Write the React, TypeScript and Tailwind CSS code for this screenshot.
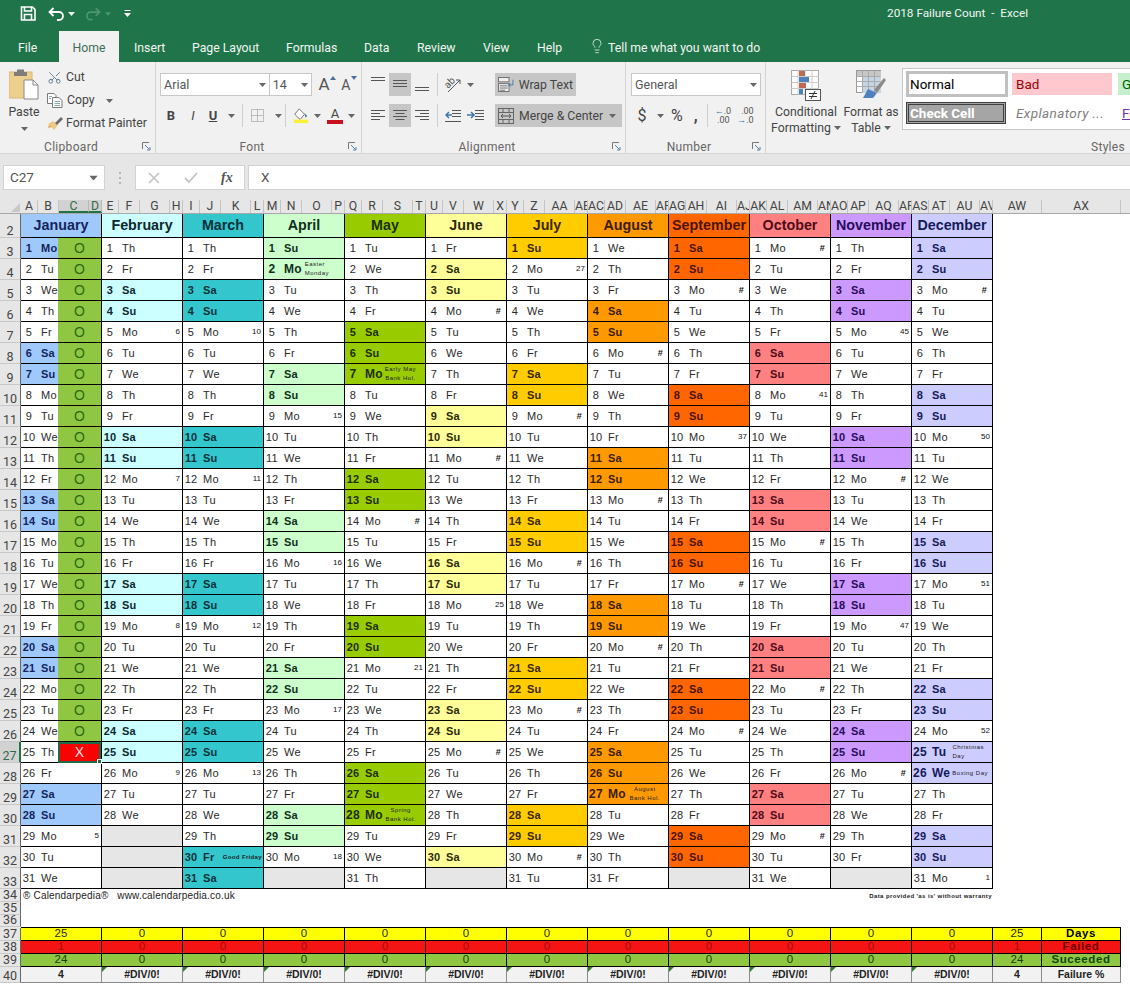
import React from 'react';
import { Lightbulb, Scissors } from 'lucide-react';

const MONTHS = [
  { name: 'January', days: 31, bg: 'bg-[#9fc9fb]', ink: 'text-[#14245c]' },
  { name: 'February', days: 28, bg: 'bg-[#ccffff]', ink: 'text-[#0c2830]' },
  { name: 'March', days: 31, bg: 'bg-[#33c6cc]', ink: 'text-[#083238]' },
  { name: 'April', days: 30, bg: 'bg-[#ccffcc]', ink: 'text-[#10301a]' },
  { name: 'May', days: 31, bg: 'bg-[#99cc00]', ink: 'text-[#1c3000]' },
  { name: 'June', days: 30, bg: 'bg-[#ffff99]', ink: 'text-[#2c2a08]' },
  { name: 'July', days: 31, bg: 'bg-[#ffcc00]', ink: 'text-[#3c2800]' },
  { name: 'August', days: 31, bg: 'bg-[#ff9900]', ink: 'text-[#3c1c00]' },
  { name: 'September', days: 30, bg: 'bg-[#ff6600]', ink: 'text-[#4c1400]' },
  { name: 'October', days: 31, bg: 'bg-[#ff8080]', ink: 'text-[#4c0c18]' },
  { name: 'November', days: 30, bg: 'bg-[#cc99ff]', ink: 'text-[#280c58]' },
  { name: 'December', days: 31, bg: 'bg-[#ccccff]', ink: 'text-[#141a58]' },
];

const WEEK: Record<string, string> = {
  '0-29': '5', '1-5': '6', '1-12': '7', '1-19': '8', '1-26': '9',
  '2-5': '10', '2-12': '11', '2-19': '12', '2-26': '13',
  '3-9': '15', '3-16': '16', '3-23': '17', '3-30': '18',
  '4-14': '#', '4-21': '21',
  '5-4': '#', '5-11': '#', '5-18': '25', '5-25': '#',
  '6-2': '27', '6-9': '#', '6-16': '#', '6-23': '#', '6-30': '#',
  '7-6': '#', '7-13': '#', '7-20': '#',
  '8-3': '#', '8-10': '37', '8-17': '#', '8-24': '#',
  '9-1': '#', '9-8': '41', '9-15': '#', '9-22': '#', '9-29': '#',
  '10-5': '45', '10-12': '#', '10-19': '47', '10-26': '#',
  '11-3': '#', '11-10': '50', '11-17': '51', '11-24': '52', '11-31': '1',
};

type Hol = { lines: string[]; cls: string };
const HOLIDAY: Record<string, Hol> = {
  '0-1': { lines: [], cls: '' },
  '2-30': { lines: ['Good Friday'], cls: 'pr-[1px] font-bold tracking-[0.35px]' },
  '3-2': { lines: ['Easter', 'Monday'], cls: 'pr-[15px] font-normal' },
  '4-7': { lines: ['Early May', 'Bank Hol.'], cls: 'pr-[9px] font-normal text-center' },
  '4-28': { lines: ['Spring', 'Bank Hol.'], cls: 'pr-[9px] font-normal text-center' },
  '7-27': { lines: ['August', 'Bank Hol.'], cls: 'pr-[8px] font-normal text-center' },
  '11-25': { lines: ['Christmas', 'Day'], cls: 'pr-[8px] font-normal' },
  '11-26': { lines: ['Boxing Day'], cls: 'pr-[4px] font-normal' },
};

const DOW = ['Su', 'Mo', 'Tu', 'We', 'Th', 'Fr', 'Sa'];
const LETTERS = 'ABCDEFGHIJKLMNOPQRSTUVWXYZ'.split('');
const SUBCOLS = [
  ...LETTERS,
  ...'ABCDEFGHIJKLMNOPQRSTUV'.split('').map((c) => 'A' + c),
];
const SUB_W = ['w-[17px]', 'w-[21px]', 'w-[30px]', 'w-[13px]'];

const Caret = ({ className = '' }: { className?: string }) => (
  <svg width="7" height="4" viewBox="0 0 7 4" className={className}>
    <path d="M0 0H7L3.5 4Z" fill="#666" />
  </svg>
);

const Launcher = () => (
  <svg width="9" height="9" viewBox="0 0 9 9" fill="none" stroke="#777" strokeWidth="1">
    <path d="M0.5 7V0.5H7" />
    <path d="M3 3L7.5 7.5M5 8H8V5" stroke="#5b7fa6" />
  </svg>
);

const Sep = () => <div className="w-px h-[23px] bg-[#d0d0d0]" />;

const Lines = ({ w, x = [], y, h = 23 }: { w: number[]; x?: number[]; y: number; h?: number }) => (
  <svg width="16" height={h} viewBox={`0 0 16 ${h}`} stroke="#555" strokeWidth="1">
    {w.map((len, i) => (
      <line key={i} x1={x[i] ?? 1} x2={(x[i] ?? 1) + len} y1={y + i * 3 + 0.5} y2={y + i * 3 + 0.5} />
    ))}
  </svg>
);

const Group = ({
  label,
  w,
  children,
}: {
  label: string;
  w: string;
  children: React.ReactNode;
}) => (
  <div className={`${w} h-[92px] flex flex-col border-r border-[#d4d4d4]`}>
    <div className="flex-1 min-h-0">{children}</div>
    <div className="h-[16px] pt-[1px] flex items-center text-[12px] leading-none text-[#666] tracking-[0.3px]">
      <span className="flex-1 text-center">{label}</span>
      <span className="pr-[4px] flex">
        <Launcher />
      </span>
    </div>
  </div>
);

const Dropdown = ({ w, label, className = '' }: { w: string; label: string; className?: string }) => (
  <div className={`${w} h-[23px] bg-white border border-[#c8c8c8] flex items-center justify-between px-[3px] text-[12.5px] text-[#555] ${className}`}>
    <span className="pt-[1px]">{label}</span>
    <Caret />
  </div>
);

const SaveIcon = () => (
  <svg width="16" height="15" viewBox="0 0 16 15" fill="none" stroke="#fff" strokeWidth="1.6">
    <path d="M1.5 1H12.5L15 3.5V14H1.5Z" />
    <path d="M4.5 1V5H11.5V1" />
    <path d="M4.5 14V8.5H11.5V14" />
  </svg>
);

const PasteIcon = () => (
  <svg width="30" height="32" viewBox="0 0 30 32">
    <rect x="0" y="3" width="23" height="26" fill="#edcf8e" stroke="#d9b873" />
    <path d="M8 0.5H15V3H18V7H5V3H8Z" fill="#7d7d7d" />
    <path d="M15 11H24L29 16V30H15Z" fill="#fff" stroke="#888" />
    <path d="M24 11V16H29" fill="none" stroke="#888" />
  </svg>
);

const CopyIcon = () => (
  <svg width="16" height="15" viewBox="0 0 16 15" fill="none" stroke="#7a7a7a">
    <path d="M0.5 0.5H7L9 2.5V10.5H0.5Z" fill="#fff" />
    <path d="M5.5 4.5H12L15 7.5V14.5H5.5Z" fill="#fff" />
    <path d="M7.5 8.5H13M7.5 10.5H13M7.5 12.5H13M2 3.5H5M2 5.5H4" stroke="#8aa" />
  </svg>
);

const PainterIcon = () => (
  <svg width="16" height="16" viewBox="0 0 16 16">
    <path d="M1 8L7 14L11 9L6 5Z" fill="#eec987" />
    <path d="M2 9L1 12L5 11Z" fill="#d8a858" />
    <path d="M8 7L14 1L16 3L10 9Z" fill="#6b6b6b" />
  </svg>
);

const BorderIcon = () => (
  <svg width="15" height="15" viewBox="0 0 15 15" fill="none" stroke="#8a8a8a" strokeDasharray="1 1">
    <rect x="1.5" y="1.5" width="12" height="12" />
    <path d="M7.5 1.5V13.5M1.5 7.5H13.5" />
  </svg>
);

const FillIcon = () => (
  <svg width="16" height="18" viewBox="0 0 18 18">
    <path d="M7 1L2 7L8 13L13 7Z" fill="#fff" stroke="#666" />
    <path d="M13 6L16 9L14 11Z" fill="#3f75b6" />
    <rect x="1" y="13" width="16" height="4" fill="#ffef3d" />
  </svg>
);

const OrientIcon = () => (
  <svg width="16" height="17" viewBox="0 0 16 17" fill="none">
    <text x="0" y="10" fontSize="10" fill="#555" transform="rotate(-45 5 8)" fontFamily="Roboto, sans-serif">ab</text>
    <path d="M3 16L15 4M15 4H11M15 4V8" stroke="#555" />
  </svg>
);

const IndentIcon = ({ flip }: { flip?: boolean }) => (
  <svg width="17" height="14" viewBox="0 0 17 14" fill="none">
    <path d={flip ? 'M8 1.5H17M8 4.5H17M8 7.5H17M8 10.5H17' : 'M7 1.5H16M7 4.5H16M7 7.5H16M0 12.5H16'} stroke="#555" />
    <path d={flip ? 'M0 6H6M4 3L7 6L4 9' : 'M7 6H1M4 3L1 6L4 9'} stroke="#3b75ad" strokeWidth="1.5" />
  </svg>
);

const WrapIcon = () => (
  <svg width="19" height="17" viewBox="0 0 19 17" fill="none" stroke="#666">
    <rect x="0.5" y="0.5" width="12" height="5" fill="#eee" />
    <rect x="0.5" y="7.5" width="12" height="9" fill="#eee" />
    <path d="M2 10H11M2 12.5H11M2 15H8" />
    <path d="M17 3V9H12M14 7L12 9L14 11" stroke="#3b75ad" />
  </svg>
);

const MergeIcon = () => (
  <svg width="16" height="16" viewBox="0 0 16 16" fill="none" stroke="#666">
    <rect x="0.5" y="0.5" width="15" height="15" />
    <path d="M0.5 4.5H15.5M0.5 11.5H15.5M5 0.5V4.5M11 0.5V4.5M5 11.5V15.5M11 11.5V15.5" />
    <path d="M3 8H13M5 6L3 8L5 10M11 6L13 8L11 10" stroke="#555" />
  </svg>
);

const CondIcon = () => (
  <svg width="30" height="31" viewBox="0 0 30 31">
    <rect x="0.5" y="0.5" width="27" height="24" fill="#fff" stroke="#aaa" />
    <path d="M7 0.5V24.5M14 0.5V24.5M21 0.5V24.5M0.5 6.5H28M0.5 12.5H28M0.5 18.5H28" stroke="#ccc" />
    <rect x="8" y="1" width="6" height="5" fill="#bf6a4f" />
    <rect x="8" y="7" width="10" height="5" fill="#4f81bd" />
    <rect x="8" y="13" width="7" height="5" fill="#bf6a4f" />
    <rect x="8" y="19" width="4" height="5" fill="#4f81bd" />
    <rect x="14.5" y="19.5" width="15" height="11" fill="#fff" stroke="#555" />
    <path d="M18 23.5H26M18 26.5H26M24 21L20 29" stroke="#333" />
  </svg>
);

const TableIcon = () => (
  <svg width="30" height="29" viewBox="0 0 30 29">
    <rect x="0.5" y="0.5" width="24" height="22" fill="#fff" stroke="#999" />
    <rect x="1" y="1" width="24" height="5" fill="#c7c7c7" />
    <rect x="6" y="6" width="19" height="17" fill="#c6d5e4" />
    <path d="M6.5 0.5V22.5M12.5 0.5V22.5M18.5 0.5V22.5M0.5 6.5H24.5M0.5 11.5H24.5M0.5 16.5H24.5" stroke="#aaa" />
    <path d="M18 20L28 8L30 10L21 23Z" fill="#8a8a8a" />
    <path d="M7 28L12 19L21 23L17 28Z" fill="#4f81bd" />
  </svg>
);

const Ribbon = () => (
  <div className="h-[92px] bg-[#f1f1f1] flex border-b border-[#d6d6d6] text-[#444] text-[12.25px]">
    <Group label="Clipboard" w="w-[156px]">
      <div className="flex pl-[8px] pt-[7px]">
        <div className="w-[32px] flex flex-col items-center">
          <PasteIcon />
          <span className="leading-none mt-[5px]">Paste</span>
          <Caret className="mt-[9px]" />
        </div>
        <div className="ml-[7px] mt-[-3px] flex flex-col">
          <div className="h-[23px] flex items-center gap-[4px]">
            <Scissors size={15} color="#5a7390" strokeWidth={1.4} className="-rotate-90" />
            <span>Cut</span>
          </div>
          <div className="h-[23px] flex items-center gap-[4px]">
            <CopyIcon />
            <span>Copy</span>
            <Caret className="ml-[7px]" />
          </div>
          <div className="h-[23px] flex items-center gap-[3px] whitespace-nowrap">
            <PainterIcon />
            <span>Format Painter</span>
          </div>
        </div>
      </div>
    </Group>
    <Group label="Font" w="w-[206px]">
      <div className="pl-[4px] pt-[11px] flex flex-col gap-[8px]">
        <div className="flex h-[23px] items-center">
          <Dropdown w="w-[111px]" label="Arial" />
          <Dropdown w="w-[43px]" label="14" className="border-l-0" />
          <span className="ml-[6px] w-[20px] text-[17px] leading-none relative text-[#555]">
            A
            <svg width="6" height="4" viewBox="0 0 6 4" className="absolute right-[2px] top-0">
              <path d="M3 0L6 4H0Z" fill="#4a6f9a" />
            </svg>
          </span>
          <span className="ml-[3px] w-[20px] text-[14px] leading-none relative text-[#555]">
            A
            <svg width="6" height="4" viewBox="0 0 6 4" className="absolute right-[4px] -top-[2px]">
              <path d="M3 4L6 0H0Z" fill="#4a6f9a" />
            </svg>
          </span>
        </div>
        <div className="flex h-[23px] items-center">
          <span className="w-[22px] text-center text-[13px] font-bold">B</span>
          <span className="w-[22px] text-center text-[13px] italic">I</span>
          <span className="w-[18px] text-center text-[13px] font-bold underline">U</span>
          <Caret className="ml-[6px]" />
          <div className="ml-[7px]">
            <Sep />
          </div>
          <div className="ml-[7px] flex items-center gap-[10px]">
            <BorderIcon />
            <Caret />
          </div>
          <div className="ml-[3px]">
            <Sep />
          </div>
          <div className="ml-[7px] flex items-center gap-[5px]">
            <FillIcon />
            <Caret />
          </div>
          <div className="ml-[6px] flex flex-col items-center w-[16px] leading-none">
            <span className="text-[13px] leading-[13px]">A</span>
            <span className="w-[16px] h-[4px] bg-[#c8101e]" />
          </div>
          <Caret className="ml-[5px]" />
        </div>
      </div>
    </Group>
    <Group label="Alignment" w="w-[264px]">
      <div className="pl-[5px] pt-[11px] flex flex-col gap-[8px]">
        <div className="flex h-[23px]">
          <div className="w-[22px] flex justify-center"><Lines w={[14, 14]} y={4} /></div>
          <div className="w-[22px] flex justify-center bg-[#c6c6c6]"><Lines w={[14, 14, 14]} y={7} /></div>
          <div className="w-[22px] flex justify-center"><Lines w={[14, 14]} y={14} /></div>
          <div className="ml-[4px] flex"><Sep /></div>
          <div className="ml-[7px] w-[50px] flex items-center gap-[6px]">
            <OrientIcon />
            <Caret />
          </div>
          <div className="h-[23px] w-[81px] bg-[#c6c6c6] flex items-center px-[3px] gap-[4px] whitespace-nowrap">
            <WrapIcon />
            <span className="pt-[1px]">Wrap Text</span>
          </div>
        </div>
        <div className="flex h-[23px]">
          <div className="w-[22px] flex justify-center"><Lines w={[14, 9, 14, 9]} y={6} /></div>
          <div className="w-[22px] flex justify-center bg-[#c6c6c6]"><Lines w={[14, 9, 14, 9]} x={[1, 3.5, 1, 3.5]} y={6} /></div>
          <div className="w-[22px] flex justify-center"><Lines w={[14, 9, 14, 9]} x={[1, 6, 1, 6]} y={6} /></div>
          <div className="ml-[4px] flex"><Sep /></div>
          <div className="ml-[7px] w-[50px] flex items-center gap-[5px]">
            <IndentIcon />
            <IndentIcon flip />
          </div>
          <div className="h-[23px] w-[127px] bg-[#c6c6c6] flex items-center pl-[3px] pr-[6px] gap-[5px] whitespace-nowrap">
            <MergeIcon />
            <span className="flex-1 pt-[1px]">Merge &amp; Center</span>
            <Caret />
          </div>
        </div>
      </div>
    </Group>
    <Group label="Number" w="w-[140px]">
      <div className="pl-[5px] pt-[11px] flex flex-col gap-[8px]">
        <Dropdown w="w-[130px]" label="General" />
        <div className="flex h-[23px] items-center">
          <span className="ml-[5px] w-[12px] text-center text-[16px]">$</span>
          <Caret className="ml-[9px]" />
          <span className="ml-[7px] text-[16px] leading-none">%</span>
          <span className="ml-[11px] text-[16px] leading-none font-bold">,</span>
          <div className="ml-[9px]"><Sep /></div>
          <div className="ml-[7px] w-[15px] flex flex-col text-[9px] leading-[9px] text-right text-[#555]">
            <span><span className="text-[#3b75ad]">←</span>.0</span>
            <span>.00</span>
          </div>
          <div className="ml-[7px] w-[17px] flex flex-col text-[9px] leading-[9px] text-right text-[#555]">
            <span>.00</span>
            <span><span className="text-[#3b75ad]">→</span>.0</span>
          </div>
        </div>
      </div>
    </Group>
    <div className="flex-1 h-[92px] flex flex-col min-w-0">
      <div className="flex-1 flex pl-[6px] min-h-0">
        <div className="w-[68px] pt-[8px] flex flex-col items-center leading-[16px] whitespace-nowrap">
          <CondIcon />
          <span className="mt-[3px]">Conditional</span>
          <span className="flex items-center gap-[3px]">Formatting <Caret /></span>
        </div>
        <div className="ml-[4px] w-[54px] pt-[8px] flex flex-col items-center leading-[16px] whitespace-nowrap">
          <TableIcon />
          <span className="mt-[5px]">Format as</span>
          <span className="flex items-center gap-[3px]">Table <Caret /></span>
        </div>
        <div className="ml-[4px] mt-[6px] flex-1 h-[62px] bg-white border-y border-l border-[#c8c8c8] overflow-hidden">
          <div className="flex items-center h-[30px] pl-[3px] text-[13.5px]">
            <div className="w-[102px] h-[26px] shrink-0 border-[3px] border-[#c0c0c0] flex items-center pl-[1px] text-black">Normal</div>
            <div className="ml-[4px] w-[100px] h-[22px] shrink-0 bg-[#ffc7ce] text-[#9c0006] flex items-center pl-[4px]">Bad</div>
            <div className="ml-[6px] w-[60px] h-[22px] shrink-0 bg-[#c6efce] text-[#006100] flex items-center pl-[4px]">Good</div>
          </div>
          <div className="flex items-center h-[28px] pl-[3px] text-[13.5px]">
            <div className="w-[100px] h-[22px] shrink-0 bg-[#a5a5a5] border-[3px] border-double border-[#3f3f3f] text-white font-bold flex items-center pl-[1px]">Check Cell</div>
            <div className="ml-[10px] w-[100px] shrink-0 italic text-[#7f7f7f] whitespace-nowrap tracking-[0.4px]">Explanatory ...</div>
            <div className="ml-[6px] shrink-0 text-[#7030a0] underline">Followed</div>
          </div>
        </div>
      </div>
      <div className="h-[16px] pt-[1px] flex items-center justify-end pr-[5px] text-[12px] leading-none text-[#666] tracking-[0.3px]">Styles</div>
    </div>
  </div>
);

const Header = () => (
  <>
    <div className="h-[31px] bg-[#20744a] flex items-start justify-between pr-[102px] pt-[6px] text-white">
      <div className="flex items-center pl-[20px]">
        <SaveIcon />
        <svg width="17" height="14" viewBox="0 0 17 14" fill="none" stroke="#fff" strokeWidth="1.8" className="ml-[12px]">
          <path d="M5.5 1L1.5 5L5.5 9M2 5H11A4 4 0 0 1 11 13H9" />
        </svg>
        <svg width="7" height="4" viewBox="0 0 7 4" className="ml-[3px]"><path d="M0 0H7L3.5 4Z" fill="#e8f2ec" /></svg>
        <svg width="16" height="14" viewBox="0 0 17 14" fill="none" stroke="#4d9673" strokeWidth="1.8" className="ml-[10px]">
          <path d="M11.5 1L15.5 5L11.5 9M15 5H6A4 4 0 0 0 6 13H8" />
        </svg>
        <svg width="6" height="4" viewBox="0 0 7 4" className="ml-[4px]"><path d="M0 0H7L3.5 4Z" fill="#4d9673" /></svg>
        <svg width="7" height="7" viewBox="0 0 7 7" className="ml-[13px]" fill="#fff"><path d="M0.5 0H6.5V1H0.5ZM0 3H7L3.5 7Z" /></svg>
      </div>
      <span className="text-[11.75px] leading-[14px] whitespace-pre text-[#f0f6f2]">2018 Failure Count  -  Excel</span>
    </div>
    <div className="h-[31px] bg-[#20744a] flex text-[12.25px] text-[#f0f6f2] whitespace-nowrap">
      <div className="w-[59px] pl-[18px] pt-[8px]">File</div>
      <div className="w-[60px] bg-[#f1f1f1] text-[#3f6f57] text-center pt-[8px]">Home</div>
      <div className="ml-[15px] flex gap-[29px] pt-[8px]">
        <div className="w-[29px] text-center">Insert</div>
        <div className="w-[65px] text-center">Page Layout</div>
        <div className="w-[49px] text-center">Formulas</div>
        <div className="w-[24px] text-center">Data</div>
        <div className="w-[37px] text-center">Review</div>
        <div className="w-[25px] text-center">View</div>
        <div className="w-[25px] text-center">Help</div>
      </div>
      <div className="ml-[27px] pt-[7px] flex items-start gap-[3px]">
        <Lightbulb size={16} strokeWidth={1.2} color="#e8f2ec" />
        <span className="pt-[1px]">Tell me what you want to do</span>
      </div>
    </div>
  </>
);

const FormulaBar = () => (
  <div className="h-[46px] bg-[#e6e6e6] pt-[11px] flex items-start text-[#555]">
    <div className="ml-[3px] w-[102px] h-[25px] bg-white border border-[#d2d2d2] flex items-center justify-between pl-[6px] pr-[7px] text-[13.5px]">
      <span>C27</span>
      <Caret className="scale-125" />
    </div>
    <div className="ml-[14px] w-[3px] h-[25px] flex flex-col justify-center gap-[3px]">
      <span className="w-[2px] h-[2px] bg-[#b5b5b5]" />
      <span className="w-[2px] h-[2px] bg-[#b5b5b5]" />
      <span className="w-[2px] h-[2px] bg-[#b5b5b5]" />
    </div>
    <div className="ml-[13px] w-[110px] h-[25px] bg-white border border-[#d2d2d2] flex items-center">
      <svg width="12" height="12" viewBox="0 0 12 12" className="ml-[12px]" stroke="#c4c4c4" strokeWidth="1.7"><path d="M1 1L11 11M11 1L1 11" /></svg>
      <svg width="14" height="12" viewBox="0 0 14 12" className="ml-[24px]" fill="none" stroke="#c4c4c4" strokeWidth="1.8"><path d="M1 6L5 10L13 1" /></svg>
      <span className="ml-[23px] font-['Liberation_Serif',serif] italic font-bold text-[14px] leading-none text-[#555]">fx</span>
    </div>
    <div className="ml-[3px] flex-1 h-[25px] bg-white border-y border-l border-[#d2d2d2] flex items-center pl-[12px] text-[13.5px]">X</div>
  </div>
);

const ColumnHeader = () => (
  <div className="h-[14px] flex bg-[#e6e6e6] border-b border-[#a8a8a8] text-[12.25px] leading-[13px] text-[#444]">
    <div className="w-[21px] flex items-end justify-end pr-[1px] pb-[1px]">
      <svg width="9" height="9" viewBox="0 0 9 9"><path d="M9 0V9H0Z" fill="#c8c8c8" /></svg>
    </div>
    {SUBCOLS.map((c, i) => (
      <div
        key={c}
        className={`${SUB_W[i % 4]} text-center overflow-hidden border-r whitespace-nowrap ${
          c === 'C' || c === 'D'
            ? 'bg-[#d2d2d2] border-[#b8b8b8] border-b-2 border-b-[#217346] text-[#2f6b4a]'
            : 'border-[#c4c4c4]'
        }`}
      >
        {c}
      </div>
    ))}
    <div className="w-[49px] text-center border-r border-[#c4c4c4]">AW</div>
    <div className="w-[79px] text-center border-r border-[#c4c4c4]">AX</div>
  </div>
);

const RowHead = ({ n, h, active }: { n: number; h: string; active?: boolean }) => (
  <div
    className={`w-[21px] ${h} shrink-0 flex items-end justify-center border-b border-r border-b-[#c8c8c8] border-r-[#666] text-[12.5px] leading-[12px] font-['Roboto',sans-serif] ${
      active ? 'bg-[#d2d2d2] text-[#2f6b4a] border-r-[#217346] border-r-2' : 'bg-[#e6e6e6] text-[#444]'
    }`}
  >
    {n}
  </div>
);

const Note = ({ hol }: { hol: Hol }) => (
  <div className={`ml-auto text-[6px] leading-[9px] tracking-[0.5px] whitespace-nowrap text-[#222] ${hol.cls}`}>
    {hol.lines.map((l) => (
      <div key={l}>{l}</div>
    ))}
  </div>
);

const DayText = ({ d, mi, holiday, wk }: { d: number; mi: number; holiday?: Hol; wk?: string }) => {
  const dow = DOW[new Date(2018, mi, d).getDay()];
  const big = holiday && holiday.lines.length > 0 && mi !== 2;
  return (
    <>
      <span className={`w-[16px] text-center shrink-0 whitespace-nowrap ${big ? 'text-[12px]' : ''}`}>{d}</span>
      <span className={`ml-[4px] whitespace-nowrap ${big ? 'text-[12px]' : ''}`}>{dow}</span>
      {holiday && holiday.lines.length > 0 && <Note hol={holiday} />}
      {wk && (
        <span className={`ml-auto pr-[2px] leading-none text-[#111] ${wk === '#' ? 'text-[9px] font-bold pr-[5px]' : 'text-[8px] tracking-normal'}`}>{wk}</span>
      )}
    </>
  );
};

const Cell = ({ mi, d }: { mi: number; d: number }) => {
  const m = MONTHS[mi];
  const base = 'w-[81px] h-[21px] shrink-0 flex items-center border-r border-b border-black text-[11px] tracking-[0.25px]';
  if (d > m.days) return <div className={`${base} bg-[#e6e6e6]`} />;
  const key = `${mi}-${d}`;
  const wd = new Date(2018, mi, d).getDay();
  const holiday = HOLIDAY[key];
  const special = wd === 0 || wd === 6 || holiday !== undefined;
  const style = special ? `${m.bg} ${m.ink} font-bold` : 'bg-white text-[#2a2a2a]';
  if (mi === 0 && d <= 25) {
    return (
      <div className={`${base} bg-white`}>
        <div className={`w-[37px] h-full shrink-0 flex items-center ${style}`}>
          <DayText d={d} mi={mi} holiday={holiday} />
        </div>
        {d < 25 ? (
          <div className="flex-1 h-full bg-[#8fc743] flex items-center justify-center text-[14px] text-[#2c6a12]">O</div>
        ) : (
          <div className="flex-1 h-[21px] -mb-px bg-[#ff0000] border-2 border-[#1f6b45] flex items-center justify-center text-[14px] text-[#ffe0e0] relative">
            X
            <span className="absolute -right-[3px] -bottom-[3px] w-[5px] h-[5px] bg-[#1f6b45] border border-white" />
          </div>
        )}
      </div>
    );
  }
  return (
    <div className={`${base} ${style}`}>
      <DayText d={d} mi={mi} holiday={holiday} wk={WEEK[key]} />
    </div>
  );
};

type StatProps = {
  row: number; h: string; bg: string; text: string; values: string[]; aw: string; label: string; labelInk: string;
};

const Stat = ({ row, bg, text, values, aw, label, labelInk, h }: StatProps) => (
  <div className="flex">
    <RowHead n={row} h={h} />
    <div className={`flex ${bg} ${text}`}>
      {values.map((v: string, i: number) => (
        <div key={i} className={`w-[81px] ${h} border-r border-b border-black flex items-center justify-center text-[11.5px] leading-none`}>{v}</div>
      ))}
      <div className={`w-[49px] ${h} border-r border-b border-black flex items-center justify-center text-[11.5px] leading-none`}>{aw}</div>
      <div className={`w-[79px] ${h} border-r border-b border-black flex items-center justify-center text-[11.5px] leading-none font-bold tracking-[0.6px] ${labelInk}`}>{label}</div>
    </div>
  </div>
);

const ZEROS = (first: string): string[] => [first, ...Array(11).fill('0')];

const Sheet = () => (
  <div className="font-['Liberation_Sans',Arial,sans-serif]">
    <div className="flex">
      <RowHead n={2} h="h-[24px]" />
      {MONTHS.map((m) => (
        <div key={m.name} className={`w-[81px] h-[24px] shrink-0 ${m.bg} ${m.ink} border-r border-b border-black flex items-center justify-center text-[14.3px] font-bold whitespace-nowrap overflow-hidden`}>
          {m.name}
        </div>
      ))}
    </div>
    {Array.from({ length: 31 }, (_, i) => i + 1).map((d) => (
      <div key={d} className="flex">
        <RowHead n={d + 2} h="h-[21px]" active={d === 25} />
        {MONTHS.map((_, mi) => (
          <Cell key={mi} mi={mi} d={d} />
        ))}
      </div>
    ))}
    <div className="flex">
      <RowHead n={34} h="h-[13px]" />
      <div className="w-[972px] h-[13px] flex items-center justify-between pl-[2px] pr-[1px]">
        <span className="text-[10px] leading-none tracking-[0.18px] text-[#222] whitespace-pre">® Calendarpedia®   www.calendarpedia.co.uk</span>
        <span className="text-[6px] leading-none font-bold tracking-[0.4px] text-[#222]">Data provided 'as is' without warranty</span>
      </div>
    </div>
    <div className="flex"><RowHead n={35} h="h-[13px]" /></div>
    <div className="flex"><RowHead n={36} h="h-[12px]" /></div>
    <div className="flex">
      <div className="w-[21px] h-px bg-[#e6e6e6]" />
      <div className="w-[1100px] h-px bg-black" />
    </div>
    <Stat row={37} h="h-[13px]" bg="bg-[#ffff00]" text="text-[#2a2a00]" values={ZEROS('25')} aw="25" label="Days" labelInk="text-black" />
    <Stat row={38} h="h-[13px]" bg="bg-[#f51414]" text="text-[#9e1010]" values={ZEROS('1')} aw="1" label="Failed" labelInk="text-[#6e0000]" />
    <Stat row={39} h="h-[13px]" bg="bg-[#8fc743]" text="text-[#17400a]" values={ZEROS('24')} aw="24" label="Suceeded" labelInk="text-[#0c4a10]" />
    <div className="flex">
      <RowHead n={40} h="h-[16px]" />
      <div className="flex bg-[#f2f2f2] text-[#222] font-bold text-[10.5px]">
        {['4', ...Array(11).fill('#DIV/0!')].map((v: string, i: number) => (
          <div key={i} className="relative w-[81px] h-[16px] border-r border-b border-[#8a8a8a] flex items-center justify-center leading-none">
            {v}
            {i > 0 && (
              <svg width="5" height="5" viewBox="0 0 5 5" className="absolute left-0 top-0">
                <path d="M0 0H5L0 5Z" fill="#2e7d32" />
              </svg>
            )}
          </div>
        ))}
        <div className="w-[49px] h-[16px] border-r border-b border-[#8a8a8a] flex items-center justify-center leading-none">4</div>
        <div className="w-[79px] h-[16px] border-r border-b border-[#8a8a8a] flex items-center justify-center leading-none">Failure %</div>
      </div>
    </div>
  </div>
);

export default function App() {
  return (
    <div className="w-[1130px] h-[984px] overflow-hidden bg-white font-['Roboto',sans-serif]">
      <Header />
      <Ribbon />
      <FormulaBar />
      <ColumnHeader />
      <Sheet />
    </div>
  );
}
